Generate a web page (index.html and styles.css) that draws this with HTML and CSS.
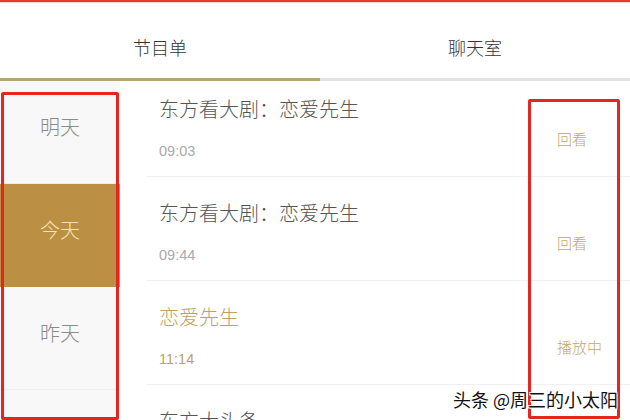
FILE: index.html
```html
<!DOCTYPE html>
<html lang="zh-CN">
<head>
<meta charset="utf-8">
<link rel="stylesheet" href="styles.css">
</head>
<body>
<div class="page">
  <div class="topline"></div>
  <div class="tabs">
    <div class="tab active">节目单</div>
    <div class="tab">聊天室</div>
  </div>
  <div class="content">
    <div class="sidebar">
      <div class="day">明天</div>
      <div class="day today">今天</div>
      <div class="day">昨天</div>
      <div class="day"></div>
    </div>
    <div class="list">
      <div class="list-inner">
        <div class="row">
          <div class="info">
            <div class="title">东方看大剧：恋爱先生</div>
            <div class="time">09:03</div>
          </div>
          <div class="action">回看</div>
        </div>
        <div class="row">
          <div class="info">
            <div class="title">东方看大剧：恋爱先生</div>
            <div class="time">09:44</div>
          </div>
          <div class="action">回看</div>
        </div>
        <div class="row playing">
          <div class="info">
            <div class="title">恋爱先生</div>
            <div class="time">11:14</div>
          </div>
          <div class="action">播放中</div>
        </div>
        <div class="row">
          <div class="info">
            <div class="title">东方大头条</div>
          </div>
        </div>
      </div>
    </div>
    <div class="mark mark-left"></div>
    <div class="mark mark-right"></div>
    <div class="watermark">头条 @周三的小太阳</div>
  </div>
</div>
</body>
</html>
```

FILE: styles.css
```css
* { box-sizing: border-box; }
html, body {
  margin: 0;
  padding: 0;
  background: #fff;
  font-family: "Noto Sans CJK SC", "Noto Sans", sans-serif;
}
.page {
  width: 630px;
  height: 420px;
  overflow: hidden;
  position: relative;
}
.topline {
  height: 3px;
  background: #e03a36;
  border-bottom: 1px solid #f6d6d4;
}
.tabs {
  display: flex;
  margin-top: -1px;
}
.tab {
  flex: 1;
  text-align: center;
  font-size: 18px;
  font-weight: 300;
  line-height: 24px;
  color: #333;
  padding: 33px 0 19px;
  border-bottom: 3px solid #e3e3e3;
}
.tab.active {
  flex: 0 0 320px;
  border-bottom-color: #b5a475;
}
.content {
  position: relative;
  display: flex;
  height: 340px;
}
.sidebar {
  width: 120px;
  background: #f8f8f8;
  flex-shrink: 0;
}
.day {
  height: 103px;
  padding-top: 34px;
  line-height: 24px;
  font-size: 20px;
  font-weight: 300;
  color: #8a8a8a;
  text-align: center;
  border-bottom: 1px solid #eeeeee;
}
.day.today {
  background: #bb9045;
  color: #f7e4b2;
  border-bottom-color: #bb9045;
}
.list {
  flex: 1;
  margin-left: 27px;
  overflow: hidden;
}
.list-inner {
  margin-top: -8px;
}
.row {
  display: grid;
  grid-template-columns: 1fr 73px;
  height: 104px;
  padding-left: 12px;
  border-bottom: 1px solid #f0f0f0;
}
.title {
  padding-top: 24px;
  font-size: 20px;
  font-weight: 300;
  line-height: 24px;
  color: #555;
  white-space: nowrap;
}
.time {
  margin-top: 21px;
  font-family: "Liberation Sans", Arial, sans-serif;
  font-size: 14.5px;
  line-height: 18px;
  color: #aaa;
}
.action {
  padding-top: 56px;
  font-size: 15px;
  font-weight: 300;
  line-height: 20px;
  color: #c3a96e;
}
.row.playing .title,
.row.playing .time {
  color: #baa265;
}
.mark {
  position: absolute;
  border: 3px solid #e4261f;
  border-radius: 2px;
}
.mark-left {
  left: 1px;
  top: 11px;
  width: 118px;
  height: 328px;
}
.mark-right {
  left: 528px;
  top: 18px;
  width: 92px;
  height: 320px;
}
.watermark {
  position: absolute;
  right: 12px;
  bottom: 11px;
  font-size: 18px;
  line-height: 22px;
  color: #111;
  text-shadow: 1px 1px 0 #fff, -1px -1px 0 #fff, 1px -1px 0 #fff, -1px 1px 0 #fff;
}
```
